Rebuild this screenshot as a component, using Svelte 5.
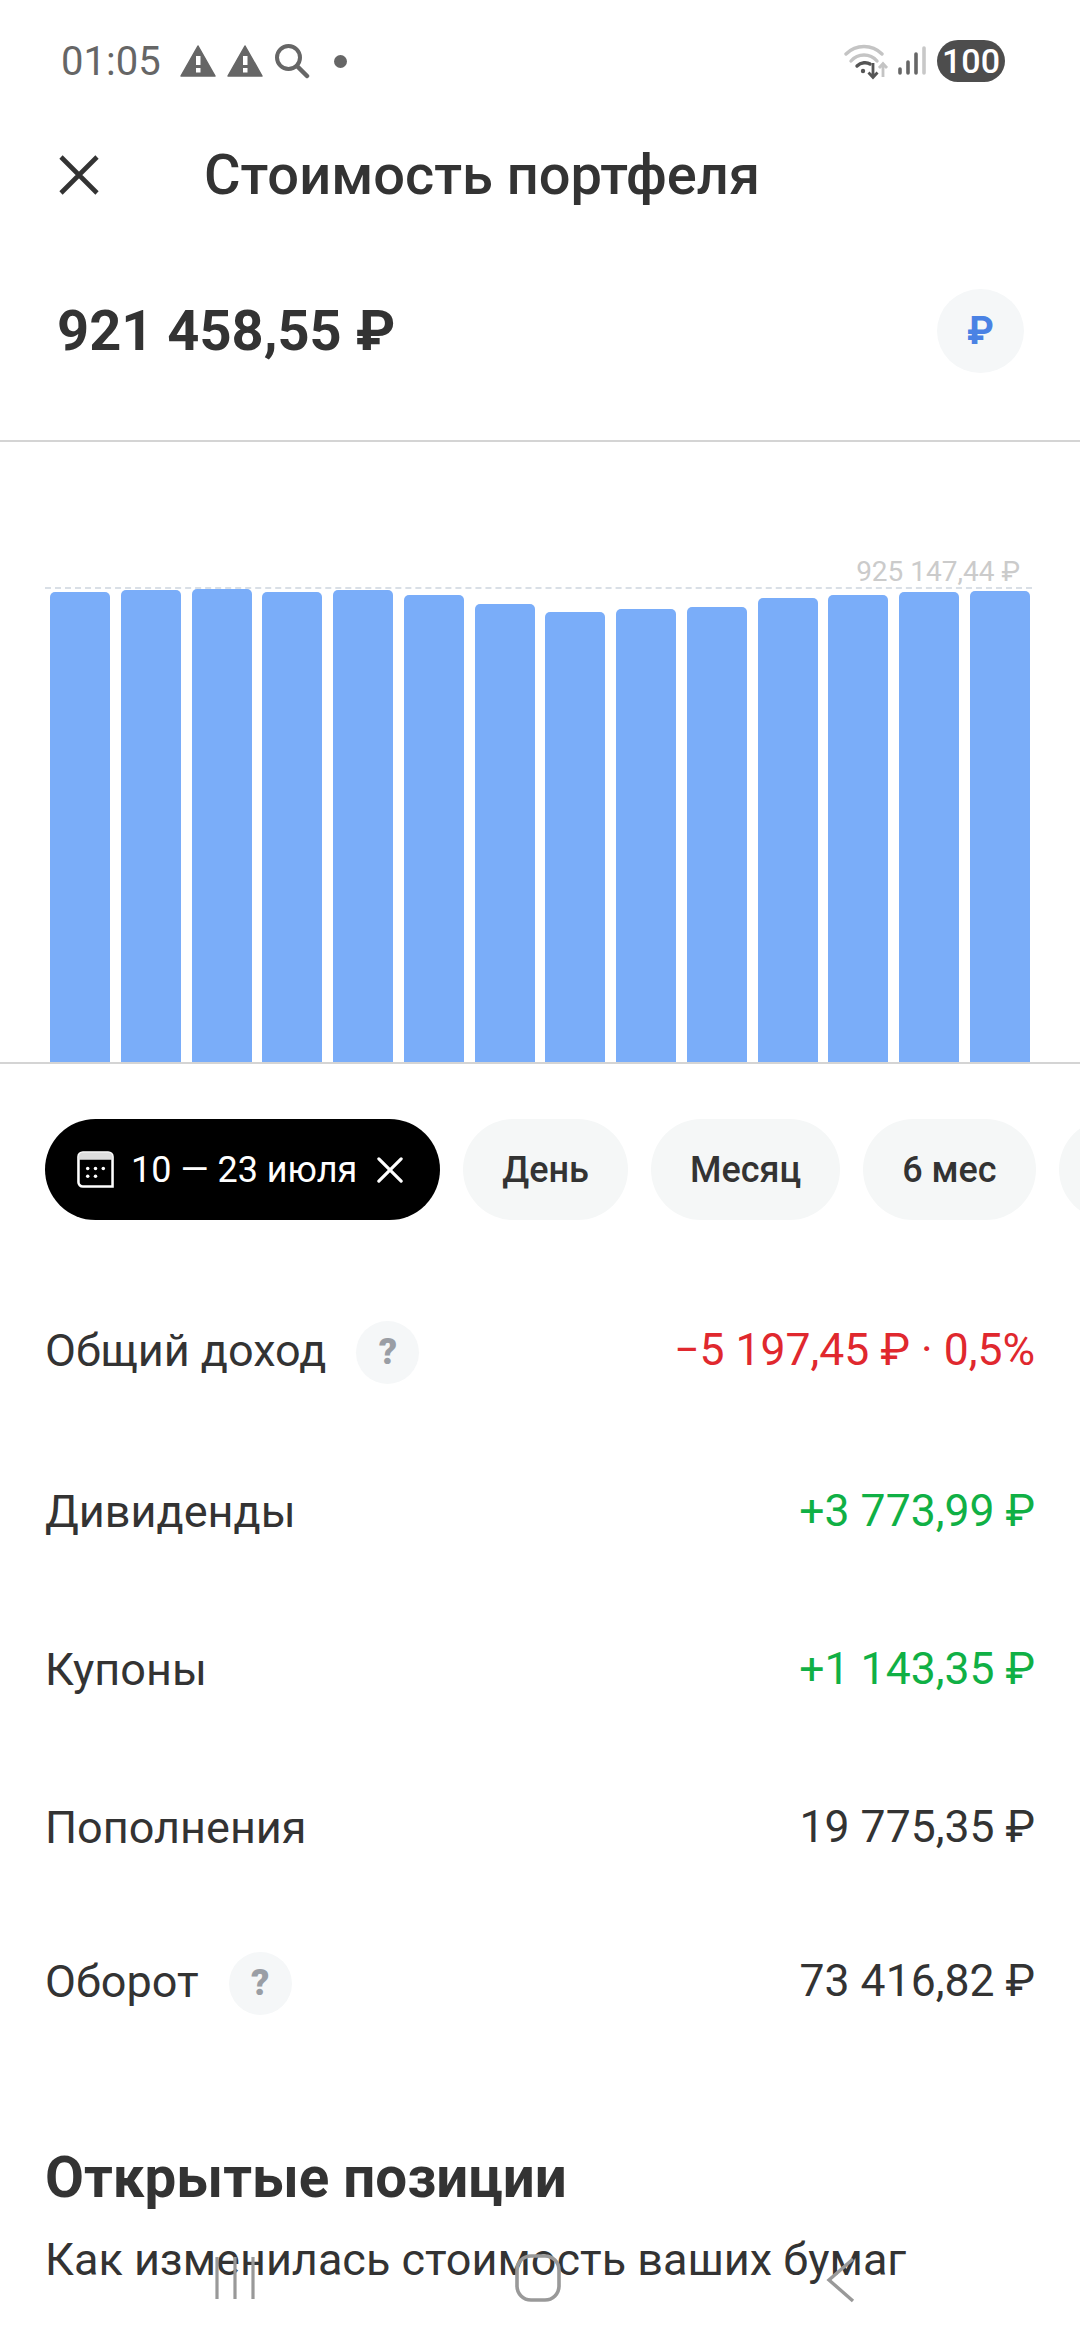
<script>
  const bars = [592, 590, 589, 592, 590, 595, 604, 612, 609, 607, 598, 595, 592, 591];
  const rows = [
    { label: 'Общий доход', help: true, value: '−5 197,45 ₽ · 0,5%', tone: 'neg', h: 162 },
    { label: 'Дивиденды', value: '+3 773,99 ₽', tone: 'pos', h: 160 },
    { label: 'Купоны', value: '+1 143,35 ₽', tone: 'pos', h: 156 },
    { label: 'Пополнения', value: '19 775,35 ₽', tone: '', h: 160 },
    { label: 'Оборот', help: true, value: '73 416,82 ₽', tone: '', h: 148 }
  ];
</script>

<div class="screen">
  <div class="status">
    <span class="time">01:05</span>
    <svg class="tri" viewBox="0 0 36 32"><path d="M18 1 L35 31 H1 Z" fill="#666" stroke="#666" stroke-linejoin="round" stroke-width="1.5"/><rect x="16" y="11" width="4.5" height="9" fill="#fff"/><rect x="16" y="23" width="4.5" height="4.5" fill="#fff"/></svg>
    <svg class="tri t2" viewBox="0 0 36 32"><path d="M18 1 L35 31 H1 Z" fill="#666" stroke="#666" stroke-linejoin="round" stroke-width="1.5"/><rect x="16" y="11" width="4.5" height="9" fill="#fff"/><rect x="16" y="23" width="4.5" height="4.5" fill="#fff"/></svg>
    <svg class="search" viewBox="0 0 36 36"><circle cx="14.5" cy="14.5" r="11.5" fill="none" stroke="#666" stroke-width="4"/><path d="M23 23 L33 33" stroke="#666" stroke-width="4.5" stroke-linecap="round"/></svg>
    <span class="dot"></span>
    <span class="spacer"></span>
    <svg class="wifi" viewBox="0 0 46 36"><path d="M2 10 C12 0 28 0 38 10" fill="none" stroke="#c4c4c4" stroke-width="3.4" stroke-linecap="round"/><path d="M7 17 C14 9 26 9 33 17" fill="none" stroke="#c4c4c4" stroke-width="3.4" stroke-linecap="round"/><path d="M13 22 C17 18 23 18 26 20" fill="none" stroke="#555" stroke-width="3.4" stroke-linecap="round"/><circle cx="19" cy="27" r="2.2" fill="#555"/><path d="M29 19 V33 M24.5 28.5 L29 33.5 L33.5 28.5" fill="none" stroke="#555" stroke-width="2.8"/><path d="M39 33 V20 M35 24 L39 19.5 L43 24" fill="none" stroke="#c4c4c4" stroke-width="2.8"/></svg>
    <svg class="signal" viewBox="0 0 30 30"><g stroke-linecap="round" stroke-width="3.6"><path d="M3 27 V23" stroke="#666"/><path d="M11 27 V16" stroke="#666"/><path d="M19 27 V8" stroke="#666"/><path d="M27 27 V2" stroke="#c8c8c8"/></g></svg>
    <span class="battery">100</span>
  </div>

  <header class="top">
    <svg class="close" viewBox="0 0 40 40"><path d="M2 2 L38 38 M38 2 L2 38" stroke="#333" stroke-width="4.6"/></svg>
    <h1>Стоимость портфеля</h1>
  </header>

  <section class="total">
    <div class="amount">921 458,55 ₽</div>
    <div class="cur">₽</div>
  </section>

  <section class="chart">
    <div class="maxlabel">925 147,44 ₽</div>
    <div class="dash"></div>
    <div class="bars">
      {#each bars as top}
        <div class="bar" style="height:{1062 - top}px"></div>
      {/each}
    </div>
  </section>

  <nav class="chips">
    <div class="chip active">
      <svg class="cal" viewBox="0 0 38 38"><path d="M6 1.5 H32 A4.5 4.5 0 0 1 36.5 6 V36.5 H6 A4.5 4.5 0 0 1 1.5 32 V6 A4.5 4.5 0 0 1 6 1.5 Z" fill="none" stroke="#fff" stroke-width="2.6"/><path d="M1.5 6 A4.5 4.5 0 0 1 6 1.5 H32 A4.5 4.5 0 0 1 36.5 6 V9 H1.5 Z" fill="#ddd"/><g fill="#fff"><circle cx="11" cy="18" r="1.8"/><circle cx="19" cy="18" r="1.8"/><circle cx="27" cy="18" r="1.8"/><circle cx="11" cy="26" r="1.8"/><circle cx="19" cy="26" r="1.8"/></g></svg>
      <span>10 — 23 июля</span>
      <svg class="chipx" viewBox="0 0 28 28"><path d="M2 2 L26 26 M26 2 L2 26" stroke="#fff" stroke-width="3.4" stroke-linecap="round"/></svg>
    </div>
    <div class="chip">День</div>
    <div class="chip">Месяц</div>
    <div class="chip">6 мес</div>
    <div class="chip more"></div>
  </nav>

  <section class="rows">
    {#each rows as r}
      <div class="row" style="height:{r.h}px">
        <span class="label">{r.label}</span>
        {#if r.help}<span class="help">?</span>{/if}
        <span class="value {r.tone}">{r.value}</span>
      </div>
    {/each}
  </section>

  <section class="open">
    <h2>Открытые позиции</h2>
    <p>Как изменилась стоимость ваших бумаг</p>
  </section>

  <div class="navbar">
    <svg class="n1" viewBox="0 0 40 44"><path d="M2 1 V43 M20 1 V43 M38 1 V43" stroke="#999" stroke-width="3.2"/></svg>
    <svg class="n2" viewBox="0 0 46 48"><rect x="2" y="2" width="42" height="44" rx="14" fill="none" stroke="#999" stroke-width="3.6"/></svg>
    <svg class="n3" viewBox="0 0 30 46"><path d="M27 2 L3 23 L27 44" fill="none" stroke="#999" stroke-width="3.4"/></svg>
  </div>
</div>

<style>
  :global(body) { margin: 0; background: #fff; }
  .screen {
    position: relative;
    width: 1080px;
    height: 2340px;
    overflow: hidden;
    background: #fff;
    font-family: Roboto, "Noto Sans", sans-serif;
    color: #333;
  }
  .status {
    height: 124px;
    box-sizing: border-box;
    padding: 0 75px 2px 61px;
    display: flex;
    align-items: center;
    color: #666;
  }
  .time { font-size: 40px; font-weight: 400; width: 119px; flex: none; }
  .tri { width: 36px; height: 32px; }
  .t2 { margin-left: 11px; }
  .search { width: 36px; height: 36px; margin-left: 11px; }
  .dot { width: 13px; height: 13px; border-radius: 50%; background: #666; margin-left: 24px; }
  .spacer { flex: 1; }
  .wifi { width: 46px; height: 36px; margin-top: 2px; }
  .signal { width: 30px; height: 30px; margin-left: 7px; }
  .battery {
    margin-left: 10px;
    width: 68px;
    height: 42px;
    border-radius: 21px;
    background: #4d4d4d;
    color: #fff;
    font-size: 34px;
    font-weight: 500;
    line-height: 42px;
    text-align: center;
  }
  .top {
    height: 102px;
    display: flex;
    align-items: center;
    padding-left: 59px;
  }
  .close { width: 40px; height: 40px; flex: none; }
  h1 {
    margin: 0 0 0 105px;
    font-size: 56px;
    font-weight: 500;
    color: #333;
    white-space: nowrap;
  }
  .total {
    height: 216px;
    box-sizing: border-box;
    padding: 0 56px 0 57px;
    display: flex;
    align-items: center;
    justify-content: space-between;
    border-bottom: 2px solid #d4d4d4;
  }
  .amount { font-size: 56px; font-weight: 700; color: #333; margin-bottom: 4px; }
  .cur {
    width: 87px;
    height: 84px;
    border-radius: 50%;
    background: #f5f7f8;
    color: #4a82e4;
    font-size: 38px;
    font-weight: 700;
    display: flex;
    align-items: center;
    justify-content: center;
    margin-bottom: 4px;
  }
  .chart {
    position: relative;
    height: 620px;
    border-bottom: 2px solid #d4d4d4;
    display: flex;
    flex-direction: column;
    justify-content: flex-end;
  }
  .maxlabel {
    position: absolute;
    right: 60px;
    top: 114px;
    font-size: 28px;
    line-height: 32px;
    color: #cbcbcb;
  }
  .dash {
    position: absolute;
    left: 45px;
    right: 48px;
    top: 145px;
    border-top: 2px dashed #d9dfe6;
  }
  .bars {
    margin: 0 50px;
    display: grid;
    grid-template-columns: repeat(14, 60px);
    justify-content: space-between;
    align-items: end;
  }
  .bar { background: #7aadf9; border-radius: 5px 5px 0 0; }
  .chips {
    display: flex;
    gap: 23px;
    padding: 55px 0 0 45px;
    height: 101px;
    white-space: nowrap;
  }
  .chip {
    flex: none;
    height: 101px;
    box-sizing: border-box;
    padding: 0 39px;
    border-radius: 51px;
    background: #f5f7f7;
    display: flex;
    align-items: center;
    font-size: 36px;
    font-weight: 500;
    color: #333;
  }
  .more { width: 150px; }
  .active {
    background: #000;
    color: #fff;
    padding: 0 37px 0 32px;
    font-weight: 400;
    font-size: 36px;
  }
  .cal { width: 37px; height: 37px; margin-right: 17px; }
  .chipx { width: 26px; height: 26px; margin-left: 20px; }
  .rows { margin-top: 49px; }
  .row {
    display: flex;
    align-items: center;
    padding: 0 45px;
    font-size: 45px;
    box-sizing: border-box;
  }
  .label { color: #333; }
  .help {
    width: 63px;
    height: 63px;
    border-radius: 50%;
    background: #f5f7f8;
    color: #9a9ea5;
    font-size: 36px;
    font-weight: 900;
    display: flex;
    align-items: center;
    justify-content: center;
    margin: 4px 0 0 30px;
  }
  .value { margin-left: auto; color: #333; font-size: 44.5px; }
  .neg { color: #e0282e; }
  .pos { color: #10b045; }
  .open { padding: 93px 45px 0; }
  h2 { margin: 0; font-size: 56.5px; font-weight: 700; color: #333; line-height: 60px; }
  p { margin: 27px 0 0; font-size: 45px; color: #333; line-height: 50px; }
  .navbar { position: absolute; left: 0; right: 0; top: 0; height: 0; }
  .navbar svg { position: absolute; }
  .n1 { left: 215px; top: 2256px; width: 40px; height: 44px; }
  .n2 { left: 515px; top: 2254px; width: 46px; height: 48px; }
  .n3 { left: 826px; top: 2257px; width: 30px; height: 46px; }
</style>
